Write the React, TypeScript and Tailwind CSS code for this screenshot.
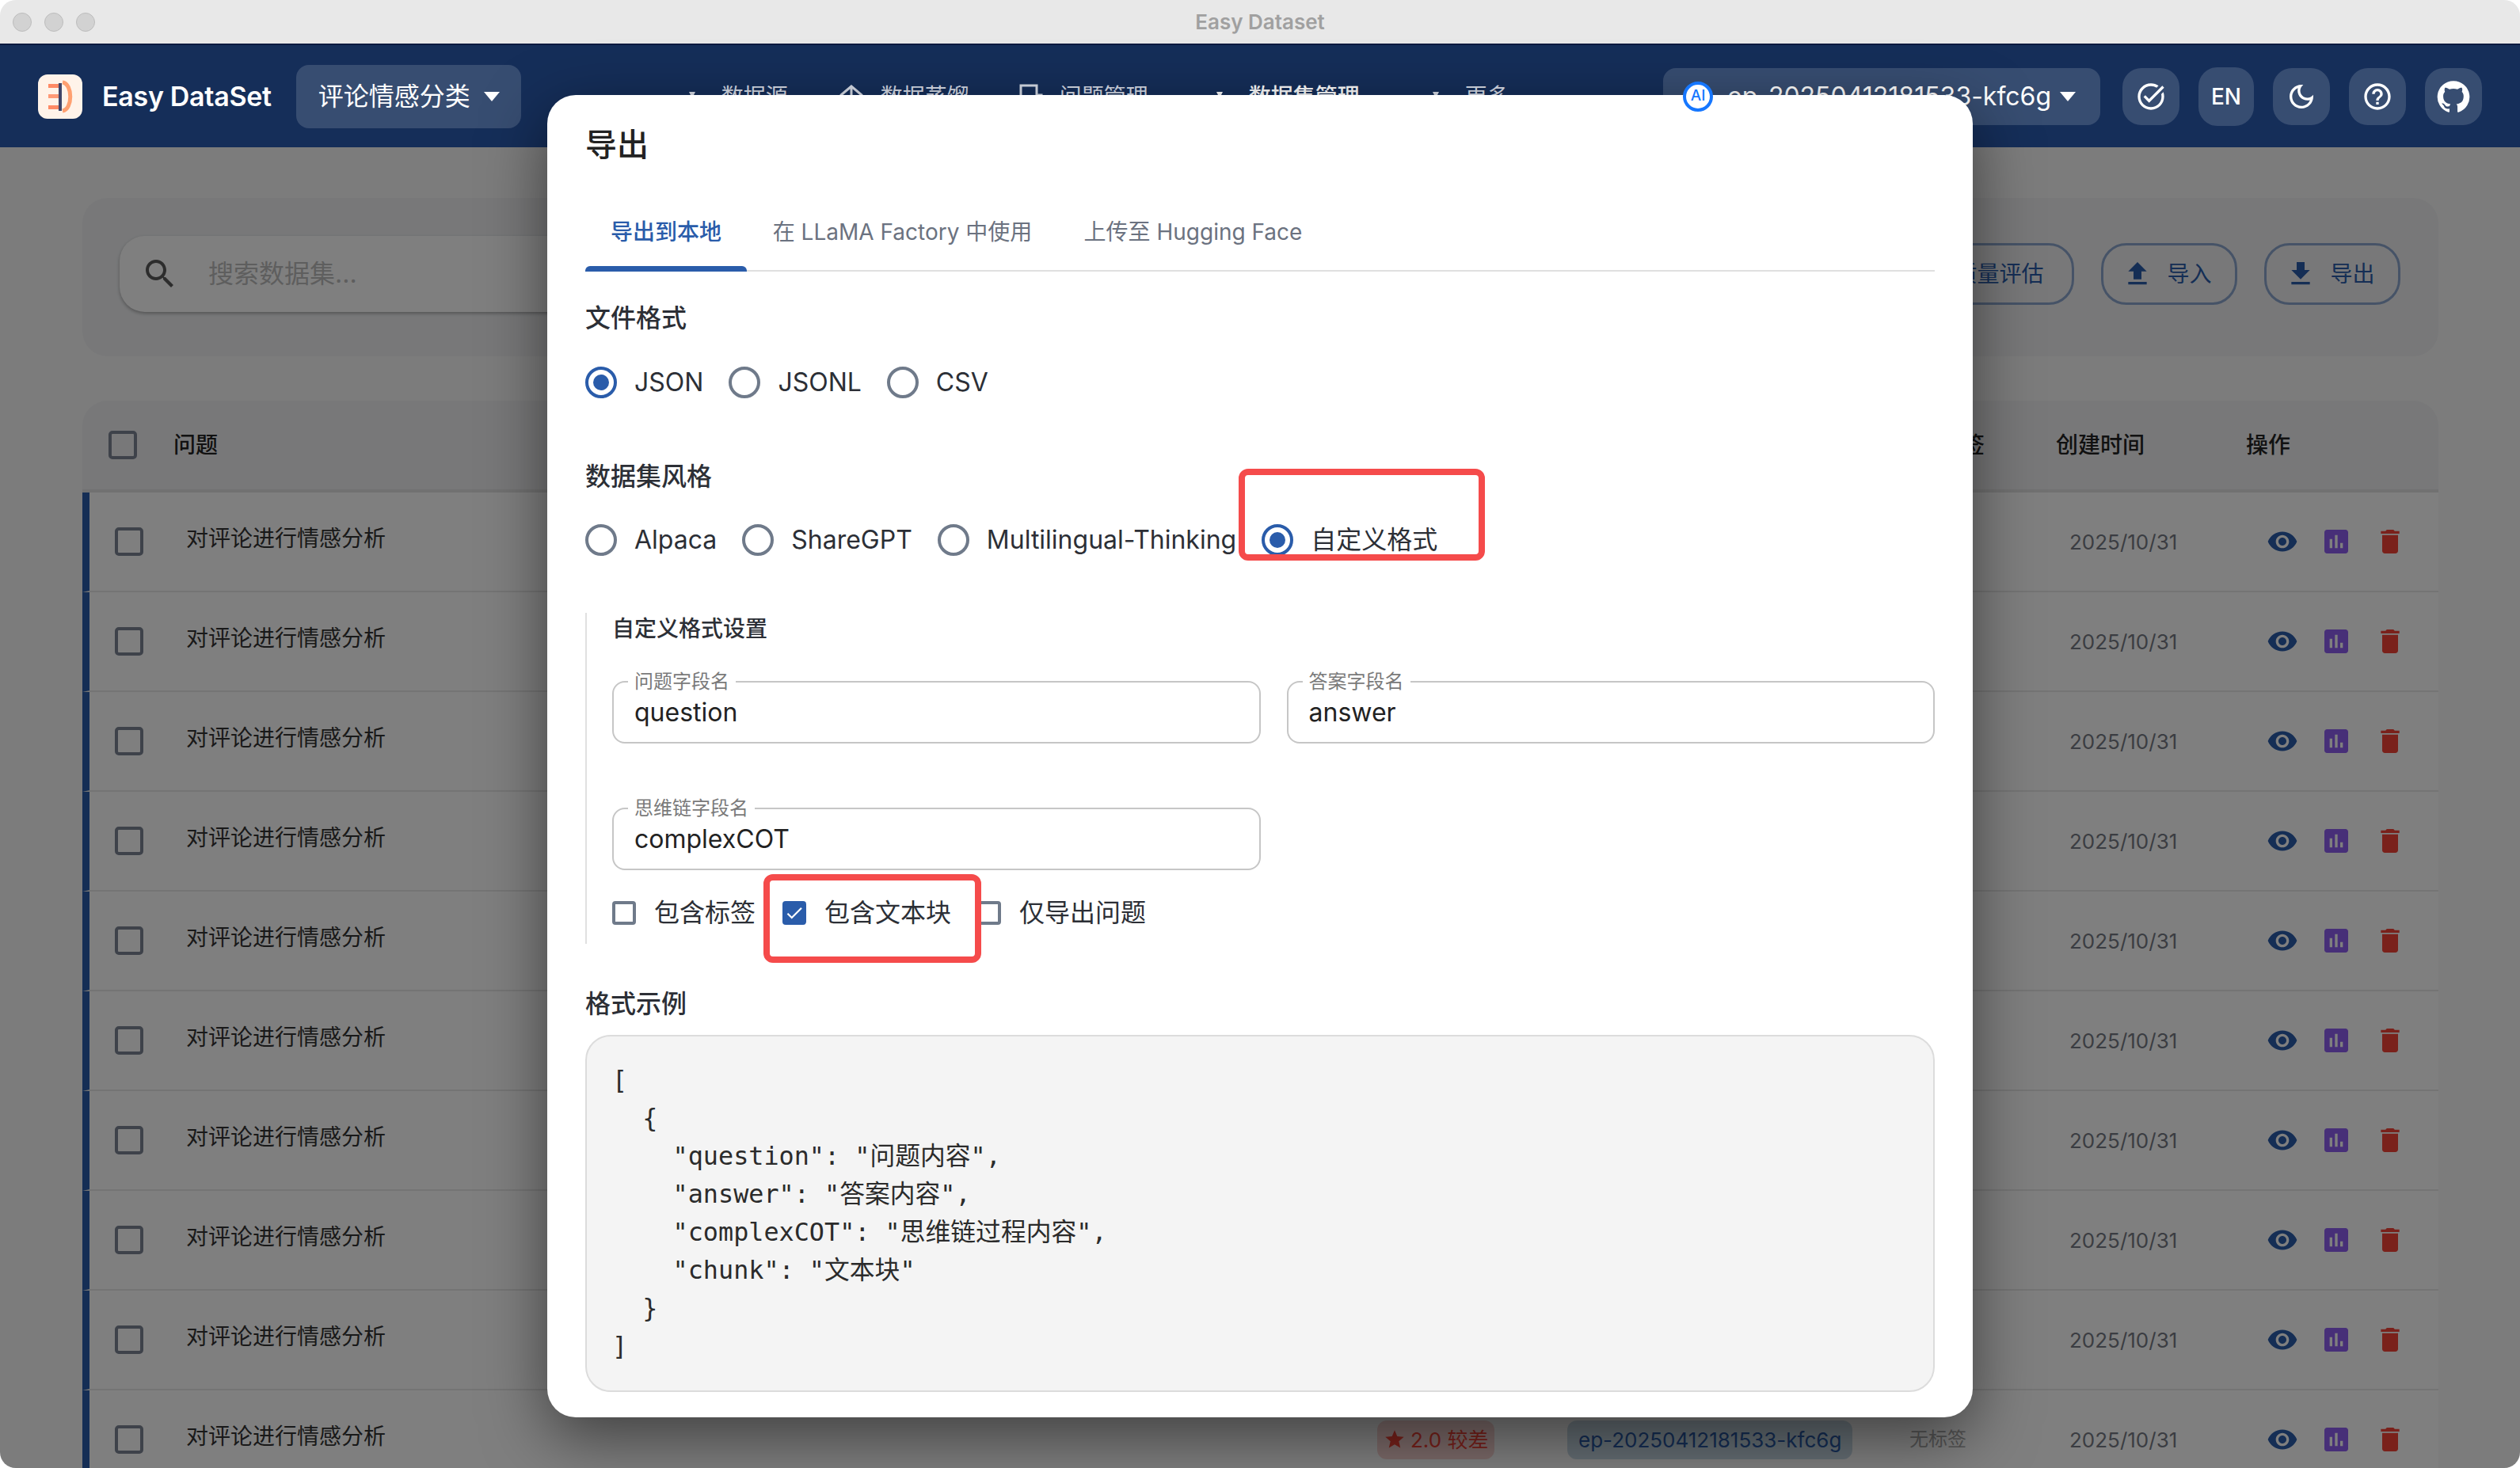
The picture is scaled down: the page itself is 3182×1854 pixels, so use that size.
const icons = {
  search:
    "M15.5 14h-.79l-.28-.27C15.41 12.59 16 11.11 16 9.5 16 5.91 13.09 3 9.5 3S3 5.91 3 9.5 5.91 16 9.5 16c1.61 0 3.09-.59 4.23-1.57l.27.28v.79l5 4.99L20.49 19l-4.99-5zm-6 0C7.01 14 5 11.99 5 9.5S7.01 5 9.5 5 14 7.01 14 9.5 11.99 14 9.5 14z",
  upload: "M9 16h6v-6h4l-7-7-7 7h4zm-4 2h14v2H5z",
  download: "M19 9h-4V3H9v6H5l7 7 7-7zM5 18v2h14v-2H5z",
  eye: "M12 4.5C7 4.5 2.73 7.61 1 12c1.73 4.39 6 7.5 11 7.5s9.27-3.11 11-7.5c-1.73-4.39-6-7.5-11-7.5zM12 17c-2.76 0-5-2.24-5-5s2.24-5 5-5 5 2.24 5 5-2.24 5-5 5zm0-8c-1.66 0-3 1.34-3 3s1.34 3 3 3 3-1.34 3-3-1.34-3-3-3z",
  chart:
    "M19 3H5c-1.1 0-2 .9-2 2v14c0 1.1.9 2 2 2h14c1.1 0 2-.9 2-2V5c0-1.1-.9-2-2-2zM9 17H7v-7h2v7zm4 0h-2V7h2v10zm4 0h-2v-4h2v4z",
  trash: "M6 19c0 1.1.9 2 2 2h8c1.1 0 2-.9 2-2V7H6v12zM19 4h-3.5l-1-1h-5l-1 1H5v2h14V4z",
  github:
    "M12 1.27a11 11 0 00-3.48 21.46c.55.09.73-.28.73-.55v-1.84c-3.03.64-3.67-1.46-3.67-1.46-.55-1.29-1.28-1.65-1.28-1.65-.92-.65.1-.65.1-.65 1.1 0 1.73 1.1 1.73 1.1.92 1.65 2.57 1.2 3.21.92a2 2 0 01.64-1.47c-2.47-.27-5.04-1.19-5.04-5.5 0-1.1.46-2.1 1.2-2.84a3.76 3.76 0 010-2.93s.91-.28 3.11 1.1c1.8-.49 3.7-.49 5.5 0 2.1-1.38 3.02-1.1 3.02-1.1a3.76 3.76 0 010 2.93c.83.74 1.2 1.74 1.2 2.94 0 4.21-2.57 5.13-5.04 5.4.45.37.82.92.82 2.02v3.03c0 .27.1.64.73.55A11 11 0 0012 1.27",
  taskAlt:
    "M22 5.18 10.59 16.6l-4.24-4.24 1.41-1.41 2.83 2.83 10-10L22 5.18zm-2.21 5.04c.13.57.21 1.17.21 1.78 0 4.42-3.58 8-8 8s-8-3.58-8-8 3.58-8 8-8c1.58 0 3.04.46 4.28 1.25l1.44-1.44C16.1 2.67 14.13 2 12 2 6.48 2 2 6.48 2 12s4.48 10 10 10 10-4.48 10-10c0-1.19-.22-2.33-.6-3.39l-1.61 1.61z",
  moon: "M9.37 5.51c-.18.64-.27 1.31-.27 1.99 0 4.08 3.32 7.4 7.4 7.4.68 0 1.35-.09 1.99-.27C17.45 17.19 14.93 19 12 19c-3.86 0-7-3.14-7-7 0-2.93 1.81-5.45 4.37-6.49zM12 3c-4.97 0-9 4.03-9 9s4.03 9 9 9 9-4.03 9-9c0-.46-.04-.92-.1-1.36-.98 1.37-2.58 2.26-4.4 2.26-2.98 0-5.4-2.42-5.4-5.4 0-1.81.89-3.42 2.26-4.4-.44-.06-.9-.1-1.36-.1z",
  help: "M11 18h2v-2h-2v2zm1-16C6.48 2 2 6.48 2 12s4.48 10 10 10 10-4.48 10-10S17.52 2 12 2zm0 18c-4.41 0-8-3.59-8-8s3.59-8 8-8 8 3.59 8 8-3.59 8-8 8zm0-14c-2.21 0-4 1.79-4 4h2c0-1.1.9-2 2-2s2 .9 2 2c0 2-3 1.75-3 5h2c0-2.25 3-2.5 3-5 0-2.21-1.79-4-4-4z",
  check: "M9 16.17 4.83 12l-1.42 1.41L9 19 21 7l-1.41-1.41z",
  star: "M12 17.27 18.18 21l-1.64-7.03L22 9.24l-7.19-.61L12 2 9.19 8.63 2 9.24l5.46 4.73L5.82 21z",
};

const Icon = ({ d, className }: { d: string; className: string }) => (
  <svg viewBox="0 0 24 24" fill="currentColor" className={className}>
    <path d={d} />
  </svg>
);

const Caret = ({ className = "" }: { className?: string }) => (
  <svg viewBox="0 0 20 12" fill="currentColor" className={`w-[20px] h-[12px] ${className}`}>
    <path d="M0 0h20L10 12z" />
  </svg>
);

const Logo = () => (
  <div className="w-[56px] h-[56px] rounded-[12px] bg-[#fff3e9] shrink-0">
    <svg viewBox="0 0 56 56" className="w-[56px] h-[56px]">
      <rect x="13" y="12" width="14" height="5" fill="#ff8a65" />
      <rect x="13" y="25" width="14" height="5" fill="#ff9a76" />
      <rect x="13" y="39" width="14" height="5" fill="#ff8a65" />
      <path d="M31 10 C44 12 44 44 31 46" fill="none" stroke="#ffa070" strokeWidth="5" />
      <rect x="26" y="11" width="4" height="35" fill="#3f4468" />
    </svg>
  </div>
);

const navItems = [
  { label: "数据源", icon: "tri", cls: "ml-0 text-[#d8dde8]" },
  { label: "数据蒸馏", icon: "house", cls: "ml-[64px] text-[#d8dde8]" },
  { label: "问题管理", icon: "book", cls: "ml-[61px] text-[#d8dde8]" },
  { label: "数据集管理", icon: "tri", cls: "ml-[74px] text-white font-medium" },
  { label: "更多", icon: "tri", cls: "ml-[80px] text-[#d8dde8]" },
];

const NavGlyph = ({ kind }: { kind: string }) => (
  <svg viewBox="0 0 32 32" className="w-[32px] h-[32px] shrink-0" fill="none" stroke="currentColor" strokeWidth="3">
    {kind === "tri" && <path d="M12 10h8l-4 8z" fill="currentColor" stroke="none" />}
    {kind === "house" && <path d="M3 14 16 3l13 11v14H3zM16 3v12l-8 8M16 15l8 8" />}
    {kind === "book" && <path d="M4 28V2h20v26M24 14h6v14" />}
  </svg>
);

const Navbar = () => (
  <header className="h-[131px] bg-[#152e59] border-t-2 border-[#0b1a40] flex items-center pl-[48px] pr-[48px] text-white shrink-0">
    <Logo />
    <span className="ml-[25px] text-[34px] font-semibold tracking-[-0.3px]">Easy DataSet</span>
    <div className="ml-[31px] w-[284px] h-[80px] rounded-[16px] bg-white/15 flex items-center pl-[28px] text-[32px]">
      评论情感分类
      <Caret className="ml-[17px]" />
    </div>
    <nav className="ml-[200px] flex items-center text-[28px] leading-[40px]">
      {navItems.map((item) => (
        <div key={item.label} className={`flex items-center gap-[21px] ${item.cls}`}>
          <NavGlyph kind={item.icon} />
          <span>{item.label}</span>
        </div>
      ))}
    </nav>
    <div className="ml-auto flex items-center gap-[24px]">
      <div className="w-[552px] h-[72px] rounded-[16px] bg-white/15 flex items-center pl-[25px] text-[32px] mr-[4px]">
        <div className="relative z-30 w-[38px] h-[38px] rounded-full border-[4px] border-[#1677ff] bg-white text-[#1677ff] text-[19px] font-medium flex items-center justify-center">
          AI
        </div>
        <span className="ml-[18px]">ep-20250412181533-kfc6g</span>
        <Caret className="ml-[11px]" />
      </div>
      <div className="w-[72px] h-[72px] rounded-[24px] bg-white/15 flex items-center justify-center">
        <Icon d={icons.taskAlt} className="w-[40px] h-[40px]" />
      </div>
      <div className="w-[70px] h-[74px] rounded-[24px] bg-white/15 flex items-center justify-center text-[28px] font-medium">
        EN
      </div>
      <div className="w-[72px] h-[72px] rounded-[24px] bg-white/15 flex items-center justify-center">
        <Icon d={icons.moon} className="w-[40px] h-[40px]" />
      </div>
      <div className="w-[72px] h-[72px] rounded-[24px] bg-white/15 flex items-center justify-center">
        <Icon d={icons.help} className="w-[40px] h-[40px]" />
      </div>
      <div className="w-[72px] h-[72px] rounded-[24px] bg-white/15 flex items-center justify-center">
        <Icon d={icons.github} className="w-[44px] h-[44px]" />
      </div>
    </div>
  </header>
);

const OutlineButton = ({ label, d, width }: { label: string; d: string; width: string }) => (
  <div className={`${width} h-[78px] rounded-[32px] border-[3px] border-[#2a5caa]/50 text-[#2a5caa] text-[28px] flex items-center justify-center gap-[17px] pr-[6px]`}>
    <Icon d={d} className="w-[40px] h-[40px]" />
    {label}
  </div>
);

const Box = () => <div className="w-[36px] h-[36px] rounded-[5px] border-[4px] border-[#7c8594] shrink-0" />;

const rows = Array.from({ length: 10 }, (_, i) => i);

const DatasetTable = () => (
  <div className="mt-[56px]">
    <div className="h-[116px] rounded-t-[32px] bg-[#f0f1f3] border-b-[4px] border-[#e2e2e2] flex items-center pl-[33px] text-[28px] font-medium text-[#222]">
      <Box />
      <span className="ml-[46px] w-[2231px]">问题</span>
      <span className="w-[146px]">标签</span>
      <span className="w-[240px]">创建时间</span>
      <span>操作</span>
    </div>
    {rows.map((r) => (
      <div key={r} className="h-[126px] bg-white border-l-[9px] border-l-[#2a5caa] border-b-2 border-b-[#e8e8e8] flex items-center pl-[32px]">
        <Box />
        <span className="ml-[54px] w-[1504px] pb-[8px] text-[28px] text-[#333]">对评论进行情感分析</span>
        <div className="w-[240px]">
          <span className="inline-flex items-center h-[49px] px-[8px] rounded-[12px] bg-[#f8d4d2] text-[#f44336] text-[26px]">
            <Icon d={icons.star} className="w-[28px] h-[28px] mr-[6px]" />
            2.0 较差
          </span>
        </div>
        <div className="w-[432px]">
          <span className="inline-flex items-center h-[49px] px-[14px] rounded-[12px] bg-[#c9dbe6] text-[#2a5caa] text-[26px]">
            ep-20250412181533-kfc6g
          </span>
        </div>
        <span className="w-[202px] text-[24px] text-[#a8a8a8]">无标签</span>
        <span className="w-[249px] text-[26px] text-[#777b85]">2025/10/31</span>
        <div className="flex items-center gap-[28px]">
          <Icon d={icons.eye} className="w-[40px] h-[40px] text-[#2a5caa]" />
          <Icon d={icons.chart} className="w-[40px] h-[40px] text-[#8f5ff0]" />
          <Icon d={icons.trash} className="w-[40px] h-[40px] text-[#f44336]" />
        </div>
      </div>
    ))}
  </div>
);

const Radio = ({ label, checked }: { label: string; checked?: boolean }) => (
  <div className="flex items-center gap-[22px] h-[72px]">
    <div className={`w-[40px] h-[40px] rounded-full border-[4px] flex items-center justify-center ${checked ? "border-[#2a5caa]" : "border-[#6f7a8a]"}`}>
      {checked && <div className="w-[20px] h-[20px] rounded-full bg-[#2a5caa]" />}
    </div>
    <span>{label}</span>
  </div>
);

const Field = ({ label, value }: { label: string; value: string }) => (
  <div className="relative h-[79px] rounded-[16px] border-2 border-[#c6c6c6] flex items-center pl-[26px] text-[32px] text-[#222]">
    <span className="absolute left-[18px] top-[-15px] bg-white px-[8px] text-[24px] leading-[28px] text-[#7a7a7a]">{label}</span>
    {value}
  </div>
);

const Check = ({ label, checked, gap }: { label: string; checked?: boolean; gap?: string }) => (
  <div className={`flex items-center gap-[23px] ${gap ?? ""}`}>
    <div className={`w-[30px] h-[30px] rounded-[4px] flex items-center justify-center ${checked ? "bg-[#2a5caa] text-white" : "border-[4px] border-[#6f7a8a]"}`}>
      {checked && <Icon d={icons.check} className="w-[26px] h-[26px]" />}
    </div>
    <span>{label}</span>
  </div>
);

const sample = `[
  {
    "question": "问题内容",
    "answer": "答案内容",
    "complexCOT": "思维链过程内容",
    "chunk": "文本块"
  }
]`;

const ExportDialog = () => (
  <div className="absolute z-20 left-[691px] top-[120px] w-[1800px] h-[1670px] rounded-[36px] bg-white px-[48px] pt-[33px] shadow-[0_24px_80px_rgba(0,0,0,0.5)] text-[#2c2f36]">
    <h2 className="text-[40px] leading-[60px] font-medium text-[#222]">导出</h2>

    <div className="mt-[32px] flex border-b-2 border-[#e0e0e0] text-[28px] h-[98px] text-[#6b7280]">
      <div className="relative w-[204px] flex items-center justify-center font-medium text-[#2a5caa]">
        导出到本地
        <div className="absolute left-0 right-0 bottom-[-2px] h-[7px] rounded-t-[6px] bg-[#2a5caa]" />
      </div>
      <div className="w-[393px] flex items-center justify-center">在 LLaMA Factory 中使用</div>
      <div className="w-[341px] flex items-center justify-center">上传至 Hugging Face</div>
    </div>

    <h3 className="mt-[35px] text-[32px] leading-[48px] font-medium">文件格式</h3>
    <div className="mt-[21px] flex gap-[32px] text-[32px]">
      <Radio label="JSON" checked />
      <Radio label="JSONL" />
      <Radio label="CSV" />
    </div>

    <h3 className="mt-[59px] text-[32px] leading-[48px] font-medium">数据集风格</h3>
    <div className="mt-[20px] flex gap-[32px] text-[32px]">
      <Radio label="Alpaca" />
      <Radio label="ShareGPT" />
      <Radio label="Multilingual-Thinking" />
      <Radio label="自定义格式" checked />
    </div>

    <div className="mt-[56px] border-l-2 border-[#e0e0e0] pl-[32px] pb-[13px]">
      <div className="text-[28px] leading-[40px] font-medium">自定义格式设置</div>
      <div className="mt-[46px] grid grid-cols-2 gap-x-[33px] gap-y-[81px]">
        <Field label="问题字段名" value="question" />
        <Field label="答案字段名" value="answer" />
        <Field label="思维链字段名" value="complexCOT" />
      </div>
      <div className="mt-[28px] h-[52px] flex items-center text-[32px]">
        <Check label="包含标签" />
        <Check label="包含文本块" checked gap="ml-[34px]" />
        <Check label="仅导出问题" gap="ml-[33px]" />
      </div>
    </div>

    <h3 className="mt-[52px] text-[32px] leading-[48px] font-medium">格式示例</h3>
    <pre className="mt-[15px] h-[451px] rounded-[32px] border-2 border-[#dcdcdc] bg-[#f4f4f4] px-[32px] py-[31px] text-[31.8px] leading-[48px] text-[#2b2b2b] font-['DejaVu_Sans_Mono','Noto_Sans_CJK_SC',monospace]">
      {sample}
    </pre>

    <div className="absolute left-[873px] top-[472px] w-[311px] h-[116px] rounded-[12px] border-[8px] border-[#f54b4b]" />
    <div className="absolute left-[273px] top-[984px] w-[275px] h-[112px] rounded-[12px] border-[8px] border-[#f54b4b]" />
  </div>
);

export default function App() {
  return (
    <div className="relative w-[3182px] h-[1854px] overflow-hidden rounded-[20px] flex flex-col bg-[#f8f8f8] font-['Inter','Noto_Sans_CJK_SC',sans-serif]">
      <div className="h-[55px] shrink-0 bg-[#e8e8e8] flex items-center pl-[16px] relative">
        <div className="flex gap-[16px]">
          <div className="w-[24px] h-[24px] rounded-full bg-[#d2d2d2] border border-[#bcbcbc]" />
          <div className="w-[24px] h-[24px] rounded-full bg-[#d2d2d2] border border-[#bcbcbc]" />
          <div className="w-[24px] h-[24px] rounded-full bg-[#d2d2d2] border border-[#bcbcbc]" />
        </div>
        <span className="flex-1 text-center pr-[120px] text-[26px] font-semibold text-[#a0a0a0]">Easy Dataset</span>
      </div>

      <Navbar />

      <main className="relative flex-1 overflow-hidden pl-[104px] pr-[103px] pt-[64px]">
        <div className="h-[200px] rounded-[32px] bg-[#f0f1f3] pl-[47px] pr-[48px] pt-[48px] pb-[56px] flex items-center justify-between">
          <div className="w-[1400px] h-[96px] rounded-[32px] bg-white shadow-[0_2px_4px_rgba(0,0,0,0.3)] flex items-center pl-[27px] text-[32px] text-[#bdbdbd]">
            <Icon d={icons.search} className="w-[48px] h-[48px] text-[#5a5a5a]" />
            <span className="ml-[37px]">搜索数据集...</span>
          </div>
          <div className="flex items-center gap-[34px]">
            <OutlineButton label="质量评估" d={icons.chart} width="w-[240px]" />
            <OutlineButton label="导入" d={icons.upload} width="w-[172px]" />
            <OutlineButton label="导出" d={icons.download} width="w-[172px]" />
          </div>
        </div>
        <DatasetTable />
        <div className="absolute inset-0 bg-black/50" />
      </main>

      <ExportDialog />
    </div>
  );
}
